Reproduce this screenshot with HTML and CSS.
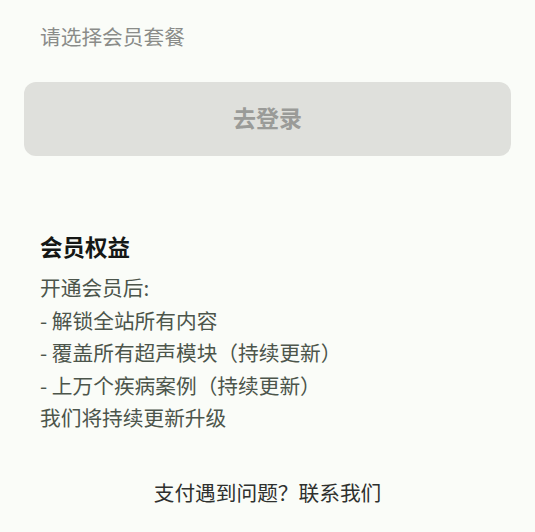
FILE: index.html
```html
<!DOCTYPE html>
<html lang="zh-CN">
<head>
<meta charset="utf-8">
<title>会员</title>
<link rel="stylesheet" href="styles.css">
</head>
<body>
<div class="page">
  <div class="label">请选择会员套餐</div>
  <div class="login-btn">去登录</div>
  <section class="rights">
    <h2 class="rights-title">会员权益</h2>
    <div class="rights-body">
      <p>开通会员后:</p>
      <p>- 解锁全站所有内容</p>
      <p>- 覆盖所有超声模块（持续更新）</p>
      <p>- 上万个疾病案例（持续更新）</p>
      <p>我们将持续更新升级</p>
    </div>
  </section>
  <div class="contact">支付遇到问题？联系我们</div>
</div>
</body>
</html>
```

FILE: styles.css
```css
html, body {
  margin: 0;
  padding: 0;
  background: #fafcf8;
}
body {
  font-family: "Noto Sans CJK SC", "Noto Sans", sans-serif;
  width: 535px;
  height: 532px;
  overflow: hidden;
}
.page {
  padding: 20px 24px 0;
}
.label {
  padding-left: 16px;
  font-size: 20.7px;
  line-height: 32px;
  color: #8a8c89;
}
.login-btn {
  margin-top: 30px;
  height: 74px;
  box-sizing: border-box;
  padding-bottom: 4px;
  border-radius: 12px;
  background: #dfe0dc;
  color: #9a9b98;
  font-size: 23px;
  font-weight: bold;
  display: flex;
  align-items: center;
  justify-content: center;
}
.rights {
  margin-top: 74px;
  padding-left: 16px;
}
.rights-title {
  margin: 0;
  font-size: 22.5px;
  line-height: 32px;
  font-weight: bold;
  color: #151715;
}
.rights-body {
  margin-top: 9px;
  font-size: 20.7px;
  line-height: 32.5px;
  color: #4c554b;
}
.rights-body p {
  margin: 0;
}
.contact {
  margin-top: 42px;
  text-align: center;
  font-size: 20.7px;
  line-height: 32px;
  color: #2e302e;
}
```
